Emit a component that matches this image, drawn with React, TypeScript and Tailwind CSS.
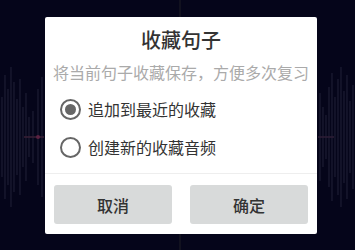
import React from 'react';

const leftBars = [
  [2, 40], [5, 62], [8, 48], [11, 70], [14, 55], [17, 38], [20, 58], [23, 30], [26, 44], [29, 20], [33, 26], [38, 48], [42, 60],
];
const rightBars = [
  [320, 44], [323, 30], [326, 22], [329, 50], [332, 64], [335, 40], [338, 58], [341, 70], [344, 46], [347, 62], [350, 36], [353, 52],
];

function Waveform() {
  return (
    <svg className="absolute inset-0 pointer-events-none" width="355" height="250" viewBox="0 0 355 250">
      <line x1="180" y1="0" x2="180" y2="250" stroke="#11111f" strokeWidth="2" />
      {leftBars.map(([x, h], i) => (
        <line key={'l' + i} x1={x} y1={137 - h} x2={x} y2={137 + h} stroke="#32324a" strokeOpacity="0.4" strokeWidth="1.6" />
      ))}
      {rightBars.map(([x, h], i) => (
        <line key={'r' + i} x1={x} y1={137 - h} x2={x} y2={137 + h} stroke="#32324a" strokeOpacity="0.4" strokeWidth="1.6" />
      ))}
      <line x1="24" y1="137" x2="44" y2="137" stroke="#3a2036" strokeWidth="1.5" />
      <circle cx="38" cy="137" r="2" fill="#5a2240" />
      <line x1="318" y1="137" x2="334" y2="137" stroke="#2e1e36" strokeWidth="1.5" />
    </svg>
  );
}

function Radio({ checked }: { checked: boolean }) {
  return (
    <span className="flex items-center justify-center w-[21px] h-[21px] rounded-full border-2 border-[#666] shrink-0">
      {checked && <span className="w-[11px] h-[11px] rounded-full bg-[#666]" />}
    </span>
  );
}

export default function App() {
  const font = { fontFamily: '"Noto Sans CJK SC", "Noto Sans", sans-serif' };
  return (
    <div className="relative w-[355px] h-[250px] bg-[#05051a] overflow-hidden" style={font}>
      <Waveform />
      <div className="relative ml-[45px] pt-[17px] w-[272px]">
        <div className="bg-white rounded-[2px] flex flex-col">
          <div className="pt-[11px] text-center text-[20px] leading-[24px] font-medium text-[#333]">收藏句子</div>
          <div className="mt-[8px] text-center text-[16px] leading-[24px] text-[#aaa] whitespace-nowrap">将当前句子收藏保存，方便多次复习</div>
          <div className="mt-[9px] flex flex-col gap-[6px] pl-[15px]">
            <div className="flex items-center gap-[7px] h-[32px]">
              <Radio checked />
              <span className="text-[16px] text-[#333]">追加到最近的收藏</span>
            </div>
            <div className="flex items-center gap-[7px] h-[32px]">
              <Radio checked={false} />
              <span className="text-[16px] text-[#333]">创建新的收藏音频</span>
            </div>
          </div>
          <div className="mt-[10px] h-px bg-[#eeeeee]" />
          <div className="mt-[11px] pb-[10px] px-[9px] flex gap-[18px]">
            <button className="w-[118px] h-[39px] rounded-[3px] bg-[#d8dada] text-[16px] font-medium text-[#333]">取消</button>
            <button className="w-[118px] h-[39px] rounded-[3px] bg-[#d8dada] text-[16px] font-medium text-[#333]">确定</button>
          </div>
        </div>
      </div>
    </div>
  );
}
